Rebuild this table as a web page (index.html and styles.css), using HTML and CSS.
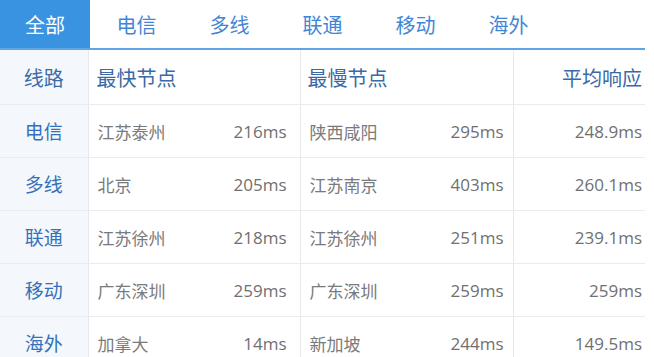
FILE: index.html
```html
<!DOCTYPE html>
<html lang="zh-CN">
<head>
<meta charset="utf-8">
<link rel="stylesheet" href="styles.css">
</head>
<body>
<div class="panel">
  <div class="tabs">
    <div class="tab active">全部</div>
    <div class="tab">电信</div>
    <div class="tab">多线</div>
    <div class="tab">联通</div>
    <div class="tab">移动</div>
    <div class="tab">海外</div>
  </div>
  <table class="speed">
    <colgroup>
      <col class="c-line"><col class="c-name1"><col class="c-ms1"><col class="c-name2"><col class="c-ms2"><col class="c-avg">
    </colgroup>
    <thead>
      <tr>
        <th class="line">线路</th>
        <th class="name" colspan="2">最快节点</th>
        <th class="name" colspan="2">最慢节点</th>
        <th class="avg">平均响应</th>
      </tr>
    </thead>
    <tbody>
      <tr><td class="line">电信</td><td class="name">江苏泰州</td><td class="ms ms1">216ms</td><td class="name">陕西咸阳</td><td class="ms ms2">295ms</td><td class="avg">248.9ms</td></tr>
      <tr><td class="line">多线</td><td class="name">北京</td><td class="ms ms1">205ms</td><td class="name">江苏南京</td><td class="ms ms2">403ms</td><td class="avg">260.1ms</td></tr>
      <tr><td class="line">联通</td><td class="name">江苏徐州</td><td class="ms ms1">218ms</td><td class="name">江苏徐州</td><td class="ms ms2">251ms</td><td class="avg">239.1ms</td></tr>
      <tr><td class="line">移动</td><td class="name">广东深圳</td><td class="ms ms1">259ms</td><td class="name">广东深圳</td><td class="ms ms2">259ms</td><td class="avg">259ms</td></tr>
      <tr><td class="line">海外</td><td class="name">加拿大</td><td class="ms ms1">14ms</td><td class="name">新加坡</td><td class="ms ms2">244ms</td><td class="avg">149.5ms</td></tr>
    </tbody>
  </table>
</div>
</body>
</html>
```
FILE: styles.css
```css
html, body {
  margin: 0;
  padding: 0;
  background: #fff;
}
body {
  font-family: "Open Sans", "Noto Sans CJK SC", sans-serif;
  overflow: hidden;
}
.panel {
  width: 645px;
}
.tabs {
  display: flex;
  height: 48px;
  border-bottom: 2px solid #62a3e3;
}
.tab {
  width: 93px;
  display: flex;
  align-items: center;
  justify-content: center;
  font-size: 20px;
  color: #3f86d6;
}
.tab.active {
  width: 90px;
  background: #3a93e0;
  color: #fff;
}
.speed {
  width: 645px;
  border-collapse: collapse;
  table-layout: fixed;
}
.c-line { width: 88px; }
.c-name1 { width: 130px; }
.c-ms1 { width: 82px; }
.c-name2 { width: 130px; }
.c-ms2 { width: 83px; }
.c-avg { width: 132px; }
.speed th, .speed td {
  padding: 0;
  border-bottom: 1px solid #e9ecef;
  white-space: nowrap;
}
.speed th {
  height: 54px;
  font-size: 20px;
  font-weight: normal;
  color: #3a6aa6;
  text-align: left;
}
.speed td {
  height: 52px;
  font-size: 17px;
  color: #7a7a7a;
}
.speed .line {
  text-align: center;
  background: #f4f8fc;
  color: #3471ba;
  border-right: 1px solid #e6e9ec;
}
.speed td.line {
  font-size: 19px;
}
.speed th.line {
  color: #3a6aa6;
}
.speed .name {
  padding-left: 9px;
}
.speed th.name {
  padding-left: 8px;
}
.speed .ms {
  text-align: right;
  color: #707070;
}
.speed .ms1 {
  padding-right: 13px;
  border-right: 1px solid #e6e9ec;
}
.speed .ms2 {
  padding-right: 9px;
  border-right: 1px solid #e6e9ec;
}
.speed th.name {
  border-right: 1px solid #e6e9ec;
}
.speed th.name + th.name {
  padding-left: 7px;
}
.speed .avg {
  text-align: right;
  padding-right: 3px;
  color: #707070;
}
.speed th.avg {
  color: #3a6aa6;
}
```
